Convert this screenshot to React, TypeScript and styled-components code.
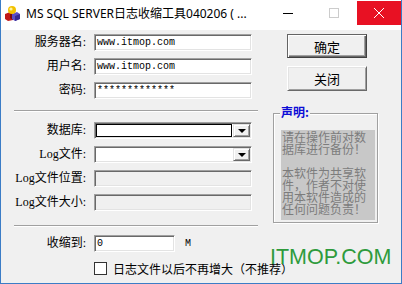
import React from "react";
import styled, { createGlobalStyle } from "styled-components";

const CJK = `"Noto Sans CJK SC", "Noto Sans", sans-serif`;
const LABEL_FONT = `"Liberation Serif", "Noto Sans CJK SC", serif`;
const MONO = `"Liberation Mono", "DejaVu Sans Mono", monospace`;

const GlobalStyle = createGlobalStyle`
  html, body { margin: 0; padding: 0; background: #f0f0f0; }
  body { font-family: ${CJK}; }
  * { box-sizing: border-box; }
`;

const Window = styled.div`
  position: relative;
  width: 402px;
  height: 284px;
  border: 1px solid #3b7cc6;
  border-top: none;
  background: #f0f0f0;
  display: flex;
  flex-direction: column;
  overflow: hidden;
`;

const TitleBar = styled.div`
  height: 30px;
  flex: none;
  background: #ffffff;
  display: flex;
  align-items: flex-start;
  padding-top: 1px;
`;

const TitleIcon = styled.svg`
  width: 16px;
  height: 16px;
  margin: 4px 0 0 3px;
  flex: none;
`;

const TitleText = styled.div`
  flex: 1;
  margin-left: 6px;
  font-family: "Noto Sans", "Noto Sans CJK SC", sans-serif;
  font-size: 12px;
  line-height: 25px;
  color: #000;
  white-space: nowrap;
  overflow: hidden;
`;

const CaptionButton = styled.div<{ $w: number; $close?: boolean }>`
  width: ${(p) => p.$w}px;
  height: 24px;
  flex: none;
  display: flex;
  align-items: center;
  justify-content: center;
  background: ${(p) => (p.$close ? "#e81123" : "transparent")};
`;

const Body = styled.div`
  flex: 1;
  display: flex;
  padding: 4px 0 0 12px;
`;

const LeftCol = styled.div`
  width: 245px;
  display: flex;
  flex-direction: column;
`;

const FieldGroup = styled.div<{ $mt?: number }>`
  display: flex;
  flex-direction: column;
  gap: 7px;
  margin-top: ${(p) => p.$mt ?? 0}px;
`;

const Row = styled.div`
  display: grid;
  grid-template-columns: 73px auto;
  column-gap: 8px;
  align-items: center;
  height: 17px;
`;

const Label = styled.div`
  font-family: ${LABEL_FONT};
  font-size: 12px;
  line-height: 17px;
  text-align: right;
  white-space: nowrap;
  color: #000;
`;

const Separator = styled.div<{ $mt: number }>`
  margin-top: ${(p) => p.$mt}px;
  margin-left: 1px;
  width: 244px;
  height: 2px;
  border-top: 1px solid #a0a0a0;
  border-bottom: 1px solid #ffffff;
`;

const Field = styled.div<{ $w: number; $disabled?: boolean }>`
  width: ${(p) => p.$w}px;
  height: 17px;
  border: 1px solid;
  border-color: #a0a0a0 #ffffff #ffffff #a0a0a0;
  box-shadow: inset 1px 1px 0 #696969, inset -1px -1px 0 #e3e3e3;
  background: ${(p) => (p.$disabled ? "#f0f0f0" : "#ffffff")};
  padding: 1px 0 0 2px;
  font-family: ${MONO};
  font-size: 10px;
  line-height: 14px;
  color: #000;
  white-space: nowrap;
  overflow: hidden;
`;

const Combo = styled.div`
  width: 158px;
  height: 17px;
  border: 1px solid;
  border-color: #a0a0a0 #ffffff #ffffff #a0a0a0;
  box-shadow: inset 1px 1px 0 #696969, inset -1px -1px 0 #e3e3e3;
  background: #ffffff;
  padding: 1px 1px 1px 1px;
  display: flex;
  gap: 1px;
`;

const ComboText = styled.div<{ $focus?: boolean }>`
  flex: 1;
  height: 13px;
  border: 1px solid ${(p) => (p.$focus ? "#000000" : "transparent")};
`;

const DropButton = styled.div`
  width: 17px;
  height: 13px;
  background: #f0f0f0;
  border: 1px solid;
  border-color: #e3e3e3 #696969 #696969 #e3e3e3;
  box-shadow: inset 1px 1px 0 #ffffff, inset -1px -1px 0 #a0a0a0;
  display: flex;
  align-items: center;
  justify-content: center;
`;

const Arrow = styled.div`
  width: 0;
  height: 0;
  border-left: 4px solid transparent;
  border-right: 4px solid transparent;
  border-top: 4px solid #000;
  margin-top: 1px;
`;

const ShrinkLine = styled.div`
  display: flex;
  align-items: center;
  gap: 10px;
`;

const Unit = styled.span`
  font-family: ${MONO};
  font-size: 10px;
  color: #000;
`;

const CheckRow = styled.div`
  margin-top: 10px;
  margin-left: 81px;
  display: flex;
  align-items: center;
  gap: 6px;
  height: 13px;
`;

const CheckBox = styled.div`
  width: 13px;
  height: 13px;
  flex: none;
  border: 1px solid #333333;
  background: #ffffff;
`;

const CheckLabel = styled.span`
  font-family: ${CJK};
  font-size: 12px;
  line-height: 13px;
  white-space: nowrap;
  color: #000;
`;

const RightCol = styled.div`
  width: 105px;
  margin-left: 15px;
  display: flex;
  flex-direction: column;
`;

const Button = styled.div<{ $default?: boolean; $h: number; $mt?: number }>`
  width: 80px;
  height: ${(p) => p.$h}px;
  margin: ${(p) => p.$mt ?? 0}px 0 0 14px;
  background: #f0f0f0;
  font-family: ${CJK};
  font-size: 13px;
  color: #000;
  display: flex;
  align-items: center;
  justify-content: center;
  border: 1px solid;
  border-color: ${(p) =>
    p.$default ? "#646464 #404040 #404040 #646464" : "#ffffff #696969 #696969 #ffffff"};
  box-shadow: ${(p) =>
    p.$default
      ? "inset 1px 1px 0 #ffffff, inset -1px -1px 0 #696969, inset -2px -2px 0 #a0a0a0"
      : "inset 1px 1px 0 #e3e3e3, inset -1px -1px 0 #a0a0a0"};
`;

const GroupBox = styled.div`
  position: relative;
  margin-top: 14px;
  padding-top: 8px;
`;

const GroupTitle = styled.div`
  position: absolute;
  top: 0;
  left: 7px;
  padding: 0 1px;
  background: #f0f0f0;
  color: #0c0cd6;
  font-family: ${CJK};
  font-weight: bold;
  font-size: 12px;
  line-height: 14px;
`;

const GroupFrame = styled.div`
  height: 110px;
  border: 1px solid #a0a0a0;
  box-shadow: inset 1px 1px 0 #ffffff, 1px 1px 0 #ffffff;
  padding: 16px 2px 2px 7px;
`;

const Notice = styled.div`
  height: 100%;
  background: #c8c8c8;
  color: #7c7c7c;
  font-family: ${CJK};
  font-size: 12px;
  line-height: 12px;
  padding: 1px 0 0 1px;
`;

const NoticePara = styled.p<{ $mt?: number }>`
  margin: ${(p) => p.$mt ?? 0}px 0 0 0;
`;

const Watermark = styled.div`
  position: absolute;
  left: 269px;
  top: 247px;
  font-family: "Liberation Sans", Arial, sans-serif;
  font-size: 21.5px;
  line-height: 21px;
  color: #2e9b3c;
  white-space: nowrap;
  pointer-events: none;
`;

const AppIcon = () => (
  <TitleIcon viewBox="0 0 16 16">
    <path d="M1 9 L6 7 L9 9 L9 15 L4 16 L1 14 Z" fill="#c01818" />
    <path d="M6 7 L9 9 L9 15 L6 13 Z" fill="#7a0c0c" />
    <path d="M8 9 L13 7 L16 9 L16 14 L11 16 L8 14 Z" fill="#5a4fc8" />
    <path d="M11 11 L16 9 L16 14 L11 16 Z" fill="#352a90" />
    <circle cx="8" cy="5" r="4" fill="#f2c200" />
    <circle cx="7" cy="4" r="1.6" fill="#fff2a0" />
  </TitleIcon>
);

export default function App() {
  return (
    <>
      <GlobalStyle />
      <Window>
        <TitleBar>
          <AppIcon />
          <TitleText>MS SQL SERVER日志收缩工具040206 ( ...</TitleText>
          <CaptionButton $w={46}>
            <svg width="10" height="10" viewBox="0 0 10 10">
              <line x1="0" y1="5.5" x2="10" y2="5.5" stroke="#000" strokeWidth="1" />
            </svg>
          </CaptionButton>
          <CaptionButton $w={46}>
            <svg width="10" height="10" viewBox="0 0 10 10">
              <rect x="0.5" y="0.5" width="9" height="9" fill="none" stroke="#cccccc" strokeWidth="1" />
            </svg>
          </CaptionButton>
          <CaptionButton $w={44} $close>
            <svg width="10" height="10" viewBox="0 0 10 10">
              <path d="M0 0 L10 10 M10 0 L0 10" stroke="#fff" strokeWidth="1" />
            </svg>
          </CaptionButton>
        </TitleBar>
        <Body>
          <LeftCol>
            <FieldGroup>
              <Row>
                <Label>服务器名:</Label>
                <Field $w={158}>www.itmop.com</Field>
              </Row>
              <Row>
                <Label>用户名:</Label>
                <Field $w={158}>www.itmop.com</Field>
              </Row>
              <Row>
                <Label>密码:</Label>
                <Field $w={158}>*************</Field>
              </Row>
            </FieldGroup>
            <Separator $mt={11} />
            <FieldGroup $mt={10}>
              <Row>
                <Label>数据库:</Label>
                <Combo>
                  <ComboText $focus />
                  <DropButton>
                    <Arrow />
                  </DropButton>
                </Combo>
              </Row>
              <Row>
                <Label>Log文件:</Label>
                <Combo>
                  <ComboText />
                  <DropButton>
                    <Arrow />
                  </DropButton>
                </Combo>
              </Row>
              <Row>
                <Label>Log文件位置:</Label>
                <Field $w={158} $disabled />
              </Row>
              <Row>
                <Label>Log文件大小:</Label>
                <Field $w={158} $disabled />
              </Row>
            </FieldGroup>
            <Separator $mt={14} />
            <FieldGroup $mt={8}>
              <Row>
                <Label>收缩到:</Label>
                <ShrinkLine>
                  <Field $w={81}>0</Field>
                  <Unit>M</Unit>
                </ShrinkLine>
              </Row>
            </FieldGroup>
            <CheckRow>
              <CheckBox />
              <CheckLabel>日志文件以后不再增大（不推荐）</CheckLabel>
            </CheckRow>
          </LeftCol>
          <RightCol>
            <Button $default $h={24}>确定</Button>
            <Button $h={25} $mt={8}>关闭</Button>
            <GroupBox>
              <GroupTitle>声明:</GroupTitle>
              <GroupFrame>
                <Notice>
                  <NoticePara>请在操作前对数据库进行备份！</NoticePara>
                  <NoticePara $mt={12}>本软件为共享软件，作者不对使用本软件造成的任何问题负责！</NoticePara>
                </Notice>
              </GroupFrame>
            </GroupBox>
          </RightCol>
        </Body>
        <Watermark>ITMOP.COM</Watermark>
      </Window>
    </>
  );
}
